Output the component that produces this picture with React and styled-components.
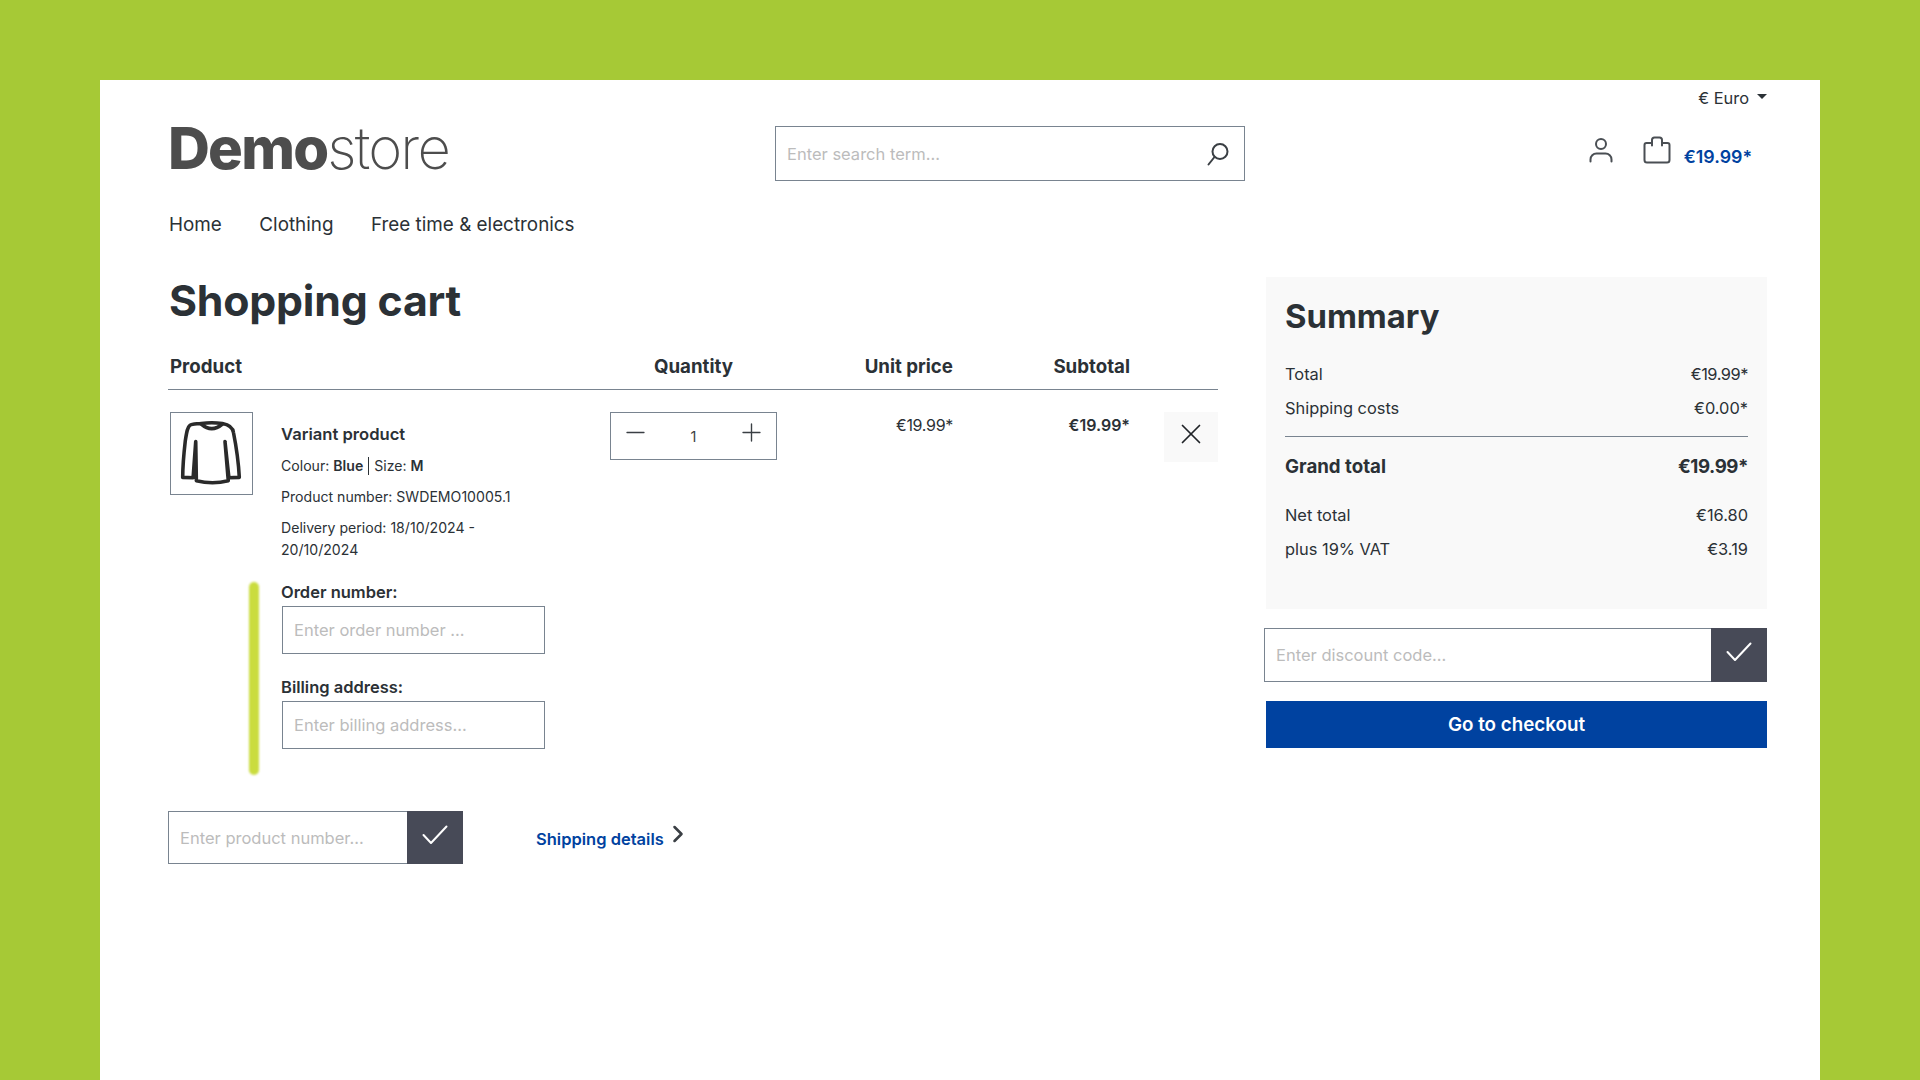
import React from "react";
import styled, { createGlobalStyle } from "styled-components";
import { Minus, Plus, X, ChevronRight } from "lucide-react";

const Global = createGlobalStyle`
  html, body { margin: 0; padding: 0; }
  body { font-family: Inter, "Noto Sans", sans-serif; color: #2b3136; }
  * { box-sizing: border-box; }
`;

const Page = styled.div`
  background: #a6c936;
  height: 1080px;
  padding: 80px 100px 0;
  overflow: hidden;
`;
const Sheet = styled.div`
  background: #fff;
  height: 1000px;
  padding: 0 53px 0 68px;
`;
const TopBar = styled.div`
  height: 46px;
  padding-top: 8px;
  display: flex;
  justify-content: flex-end;
`;
const Currency = styled.div`
  display: flex;
  align-items: center;
  height: 20px;
  gap: 8px;
  font-size: 16.4px;
  line-height: 20px;
  &::after {
    content: "";
    border-top: 5px solid #2b3136;
    border-left: 5px solid transparent;
    border-right: 5px solid transparent;
    margin-top: -3px;
  }
`;
const HeaderRow = styled.header`
  display: grid;
  grid-template-columns: 607px 470px 1fr;
  height: 55px;
`;
const Logo = styled.div`
  font-size: 58px;
  line-height: 44px;
  letter-spacing: -1.8px;
  color: #4d4d4d;
  font-weight: 200;
  b { font-weight: 800; }
`;
const SearchBox = styled.div`
  display: flex;
  align-items: center;
  border: 1px solid #798490;
  height: 55px;
  padding: 0 14px 0 9px;
`;
const BaseInput = styled.input`
  border: 0;
  outline: 0;
  background: transparent;
  font: 400 16.5px Inter, sans-serif;
  color: #2b3136;
  min-width: 0;
  flex: 1;
  &::placeholder { color: #bcbcbc; opacity: 1; }
`;
const Actions = styled.div`
  display: flex;
  justify-content: flex-end;
  align-items: flex-start;
  padding: 11px 15px 0 0;
`;
const UserIcon = styled.svg`
  width: 24px;
  height: 26px;
  margin-right: 30px;
`;
const BagIcon = styled.svg`
  width: 28px;
  height: 28px;
  margin: -1px 13px 0 0;
`;
const CartTotal = styled.div`
  font-size: 17.8px;
  line-height: 24px;
  font-weight: 600;
  color: #0042a0;
  margin-top: 8px;
`;
const Nav = styled.nav`
  display: flex;
  gap: 37.5px;
  padding: 32px 0 0 1px;
  font-size: 18.85px;
  line-height: 24px;
`;
const Main = styled.main`
  display: grid;
  grid-template-columns: 1050px 501px;
  gap: 48px;
  margin-top: 40px;
`;
const Title = styled.h1`
  margin: 0 0 29px 1px;
  font-size: 42.8px;
  line-height: 48px;
  font-weight: 700;
  letter-spacing: -0.2px;
`;
const Columns = styled.div`
  display: grid;
  grid-template-columns: 442px 167px 176px 177px 88px;
`;
const TableHead = styled(Columns)`
  height: 36px;
  padding-bottom: 11px;
  border-bottom: 1px solid #798490;
  font-size: 18.7px;
  line-height: 25px;
  font-weight: 700;
`;
const HeadCell = styled.div`
  text-align: ${(p) => p.$align || "left"};
  padding-left: ${(p) => (p.$first ? "2px" : 0)};
`;
const TableRow = styled(Columns)`
  padding-top: 22px;
`;
const ProductCell = styled.div`
  display: flex;
  flex-direction: column;
`;
const ProductTop = styled.div`
  display: flex;
  gap: 28px;
  padding-left: 2px;
`;
const Thumb = styled.div`
  width: 83px;
  height: 83px;
  flex: none;
  border: 1px solid #798490;
`;
const ThumbArt = styled.svg`
  display: block;
  width: 100%;
  height: 100%;
`;
const Info = styled.div`
  padding-top: 12px;
  width: 240px;
`;
const ProductName = styled.div`
  font-size: 16.6px;
  line-height: 20px;
  font-weight: 600;
`;
const Meta = styled.div`
  font-size: 14.1px;
  line-height: 22px;
  margin-top: ${(p) => p.$gap}px;
  b { font-weight: 600; }
`;
const Sep = styled.span`
  display: inline-block;
  width: 1px;
  height: 18px;
  background: #2b3136;
  margin: 0 5px;
  vertical-align: -4px;
`;
const Fields = styled.div`
  display: flex;
  gap: 22px;
  margin: 21px 0 0 81px;
`;
const Bar = styled.div`
  width: 10px;
  flex: none;
  background: #cadc3e;
  border-radius: 5px;
  filter: blur(1.2px);
`;
const FieldStack = styled.div`
  width: 264px;
  padding-bottom: 26px;
`;
const FieldLabel = styled.label`
  display: block;
  font-size: 16.5px;
  line-height: 20px;
  font-weight: 600;
  margin-top: ${(p) => (p.$next ? "23px" : 0)};
`;
const FieldInput = styled(BaseInput)`
  display: block;
  width: 263px;
  height: 48px;
  margin: 4px 0 0 1px;
  padding: 0 11px;
  border: 1px solid #798490;
  flex: none;
`;
const QtyBox = styled.div`
  height: 48px;
  border: 1px solid #798490;
  display: flex;
  justify-content: space-between;
  padding: 0 10px;
  align-items: center;
  color: #3a3f44;
`;
const QtyGlyph = styled.span`
  display: flex;
  margin-top: -8px;
`;
const QtyValue = styled.span`
  font-size: 14.5px;
  line-height: 20px;
  margin-top: 2px;
`;
const Price = styled.div`
  font-size: 16px;
  line-height: 20px;
  padding-top: 3px;
  text-align: right;
  font-weight: ${(p) => (p.$bold ? 600 : 400)};
  letter-spacing: ${(p) => (p.$bold ? "0" : "-0.3px")};
`;
const RemoveCell = styled.div`
  display: flex;
  justify-content: flex-end;
`;
const RemoveButton = styled.button`
  width: 54px;
  height: 50px;
  border: 0;
  padding: 0 0 6px;
  background: #f9f9f9;
  color: #1f2327;
  display: flex;
  align-items: center;
  justify-content: center;
`;
const BottomRow = styled.div`
  display: flex;
  align-items: flex-start;
  gap: 73px;
  margin-top: 36px;
`;
const InlineForm = styled.div`
  display: flex;
  height: ${(p) => p.$h}px;
  width: ${(p) => p.$w}px;
  margin-left: ${(p) => p.$ml || 0}px;
  border: 1px solid #798490;
  border-right: 0;
`;
const InlineInput = styled(BaseInput)`
  padding: 0 11px;
  height: 100%;
`;
const CheckButton = styled.button`
  width: 56px;
  flex: none;
  margin: -1px 0;
  border: 0;
  padding: 0 0 6px;
  background: #474a57;
  color: #fff;
  display: flex;
  align-items: center;
  justify-content: center;
`;
const ShipLink = styled.a`
  display: flex;
  align-items: flex-start;
  margin-top: 18px;
  font-size: 16.5px;
  line-height: 20px;
  font-weight: 600;
  color: #0042a0;
  span { display: flex; color: #3a3f44; margin-top: -9px; }
`;
const Card = styled.section`
  background: #f9f9f9;
  padding: 21px 19px 50px;
`;
const CardTitle = styled.h2`
  margin: 0 0 29px;
  font-size: 32.8px;
  line-height: 37px;
  font-weight: 700;
`;
const SumRow = styled.div`
  display: flex;
  justify-content: space-between;
  font-size: ${(p) => (p.$big ? "18.7px" : "16.4px")};
  line-height: ${(p) => (p.$big ? "24px" : "20px")};
  font-weight: ${(p) => (p.$big ? 700 : 400)};
  margin-top: ${(p) => p.$gap || 0}px;
`;
const TightValue = styled.span`
  letter-spacing: -0.45px;
`;
const Rule = styled.hr`
  border: 0;
  height: 1px;
  background: #798490;
  margin: 18px 0 18px;
`;
const DiscountWrap = styled.div`
  margin-top: 19px;
`;
const Checkout = styled.button`
  display: block;
  width: 100%;
  height: 47px;
  margin-top: 19px;
  border: 0;
  background: #0042a0;
  color: #fff;
  font: 600 18.8px Inter, sans-serif;
`;

const Check = () => (
  <svg width="26" height="26" viewBox="0 0 26 26" fill="none" stroke="currentColor" strokeWidth="2" strokeLinecap="round" strokeLinejoin="round">
    <path d="M1.5 13 9 21 24.5 4.5" />
  </svg>
);

export default function App() {
  return (
    <>
      <Global />
      <Page>
        <Sheet>
          <TopBar>
            <Currency>€ Euro</Currency>
          </TopBar>
          <HeaderRow>
            <Logo><b>Demo</b>store</Logo>
            <SearchBox>
              <BaseInput placeholder="Enter search term..." />
              <svg width="24" height="24" viewBox="0 0 24 24" fill="none" stroke="#3a3f44" strokeWidth="2" strokeLinecap="round">
                <circle cx="14" cy="9.5" r="7.5" />
                <path d="M8.5 15 2.5 22.5" />
              </svg>
            </SearchBox>
            <Actions>
              <UserIcon viewBox="0 0 24 26" fill="none" stroke="#4a4f54" strokeWidth="2" strokeLinecap="round">
                <circle cx="12" cy="7" r="5" />
                <path d="M1.5 24.5v-2a6 6 0 0 1 6-6h9a6 6 0 0 1 6 6v2" />
              </UserIcon>
              <BagIcon viewBox="0 0 28 28" fill="none" stroke="#4a4f54" strokeWidth="2" strokeLinecap="round" strokeLinejoin="round">
                <path d="M9 7H3.5a2 2 0 0 0-2 2v15a2.5 2.5 0 0 0 2.5 2.5h20a2.5 2.5 0 0 0 2.5-2.5V9a2 2 0 0 0-2-2H19M9 9.5V4a2.5 2.5 0 0 1 2.5-2.5h5A2.5 2.5 0 0 1 19 4v5.5" />
              </BagIcon>
              <CartTotal>€19.99*</CartTotal>
            </Actions>
          </HeaderRow>
          <Nav>
            <span>Home</span>
            <span>Clothing</span>
            <span>Free time &amp; electronics</span>
          </Nav>
          <Main>
            <div>
              <Title>Shopping cart</Title>
              <TableHead>
                <HeadCell $first>Product</HeadCell>
                <HeadCell $align="center">Quantity</HeadCell>
                <HeadCell $align="right">Unit price</HeadCell>
                <HeadCell $align="right">Subtotal</HeadCell>
              </TableHead>
              <TableRow>
                <ProductCell>
                  <ProductTop>
                    <Thumb>
                      <ThumbArt viewBox="0 0 249 249" fill="none" stroke="#2a2a2a" strokeWidth="11" strokeLinejoin="round" strokeLinecap="round">
                        <path d="M93 32C75 34 65 33 58 38C50 44 48 60 44 85C40 120 36 165 36 198L68 199L76 88L78 208C110 216 145 216 176 208L166 88L178 199L210 198C208 160 200 100 192 60C190 44 180 36 158 32Q125 28 93 32Z" />
                        <path d="M93 34Q125 62 158 34" />
                      </ThumbArt>
                    </Thumb>
                    <Info>
                      <ProductName>Variant product</ProductName>
                      <Meta $gap={11}>Colour: <b>Blue</b><Sep />Size: <b>M</b></Meta>
                      <Meta $gap={9}>Product number: SWDEMO10005.1</Meta>
                      <Meta $gap={9}>Delivery period: 18/10/2024 - 20/10/2024</Meta>
                    </Info>
                  </ProductTop>
                  <Fields>
                    <Bar />
                    <FieldStack>
                      <FieldLabel>Order number:</FieldLabel>
                      <FieldInput placeholder="Enter order number ..." />
                      <FieldLabel $next>Billing address:</FieldLabel>
                      <FieldInput placeholder="Enter billing address..." />
                    </FieldStack>
                  </Fields>
                </ProductCell>
                <div>
                  <QtyBox>
                    <QtyGlyph><Minus size={29} strokeWidth={1.15} /></QtyGlyph>
                    <QtyValue>1</QtyValue>
                    <QtyGlyph><Plus size={29} strokeWidth={1.15} /></QtyGlyph>
                  </QtyBox>
                </div>
                <Price>€19.99*</Price>
                <Price $bold>€19.99*</Price>
                <RemoveCell>
                  <RemoveButton><X size={34} strokeWidth={1.2} /></RemoveButton>
                </RemoveCell>
              </TableRow>
              <BottomRow>
                <InlineForm $h={53} $w={295}>
                  <InlineInput placeholder="Enter product number..." />
                  <CheckButton><Check /></CheckButton>
                </InlineForm>
                <ShipLink>
                  Shipping details
                  <span><ChevronRight size={28} strokeWidth={2.2} /></span>
                </ShipLink>
              </BottomRow>
            </div>
            <aside>
              <Card>
                <CardTitle>Summary</CardTitle>
                <SumRow><span>Total</span><TightValue>€19.99*</TightValue></SumRow>
                <SumRow $gap={14}><span>Shipping costs</span><span>€0.00*</span></SumRow>
                <Rule />
                <SumRow $big><span>Grand total</span><TightValue>€19.99*</TightValue></SumRow>
                <SumRow $gap={26}><span>Net total</span><span>€16.80</span></SumRow>
                <SumRow $gap={14}><span>plus 19% VAT</span><span>€3.19</span></SumRow>
              </Card>
              <DiscountWrap>
                <InlineForm $h={54} $w={503} $ml={-2}>
                  <InlineInput placeholder="Enter discount code..." />
                  <CheckButton><Check /></CheckButton>
                </InlineForm>
              </DiscountWrap>
              <Checkout>Go to checkout</Checkout>
            </aside>
          </Main>
        </Sheet>
      </Page>
    </>
  );
}
